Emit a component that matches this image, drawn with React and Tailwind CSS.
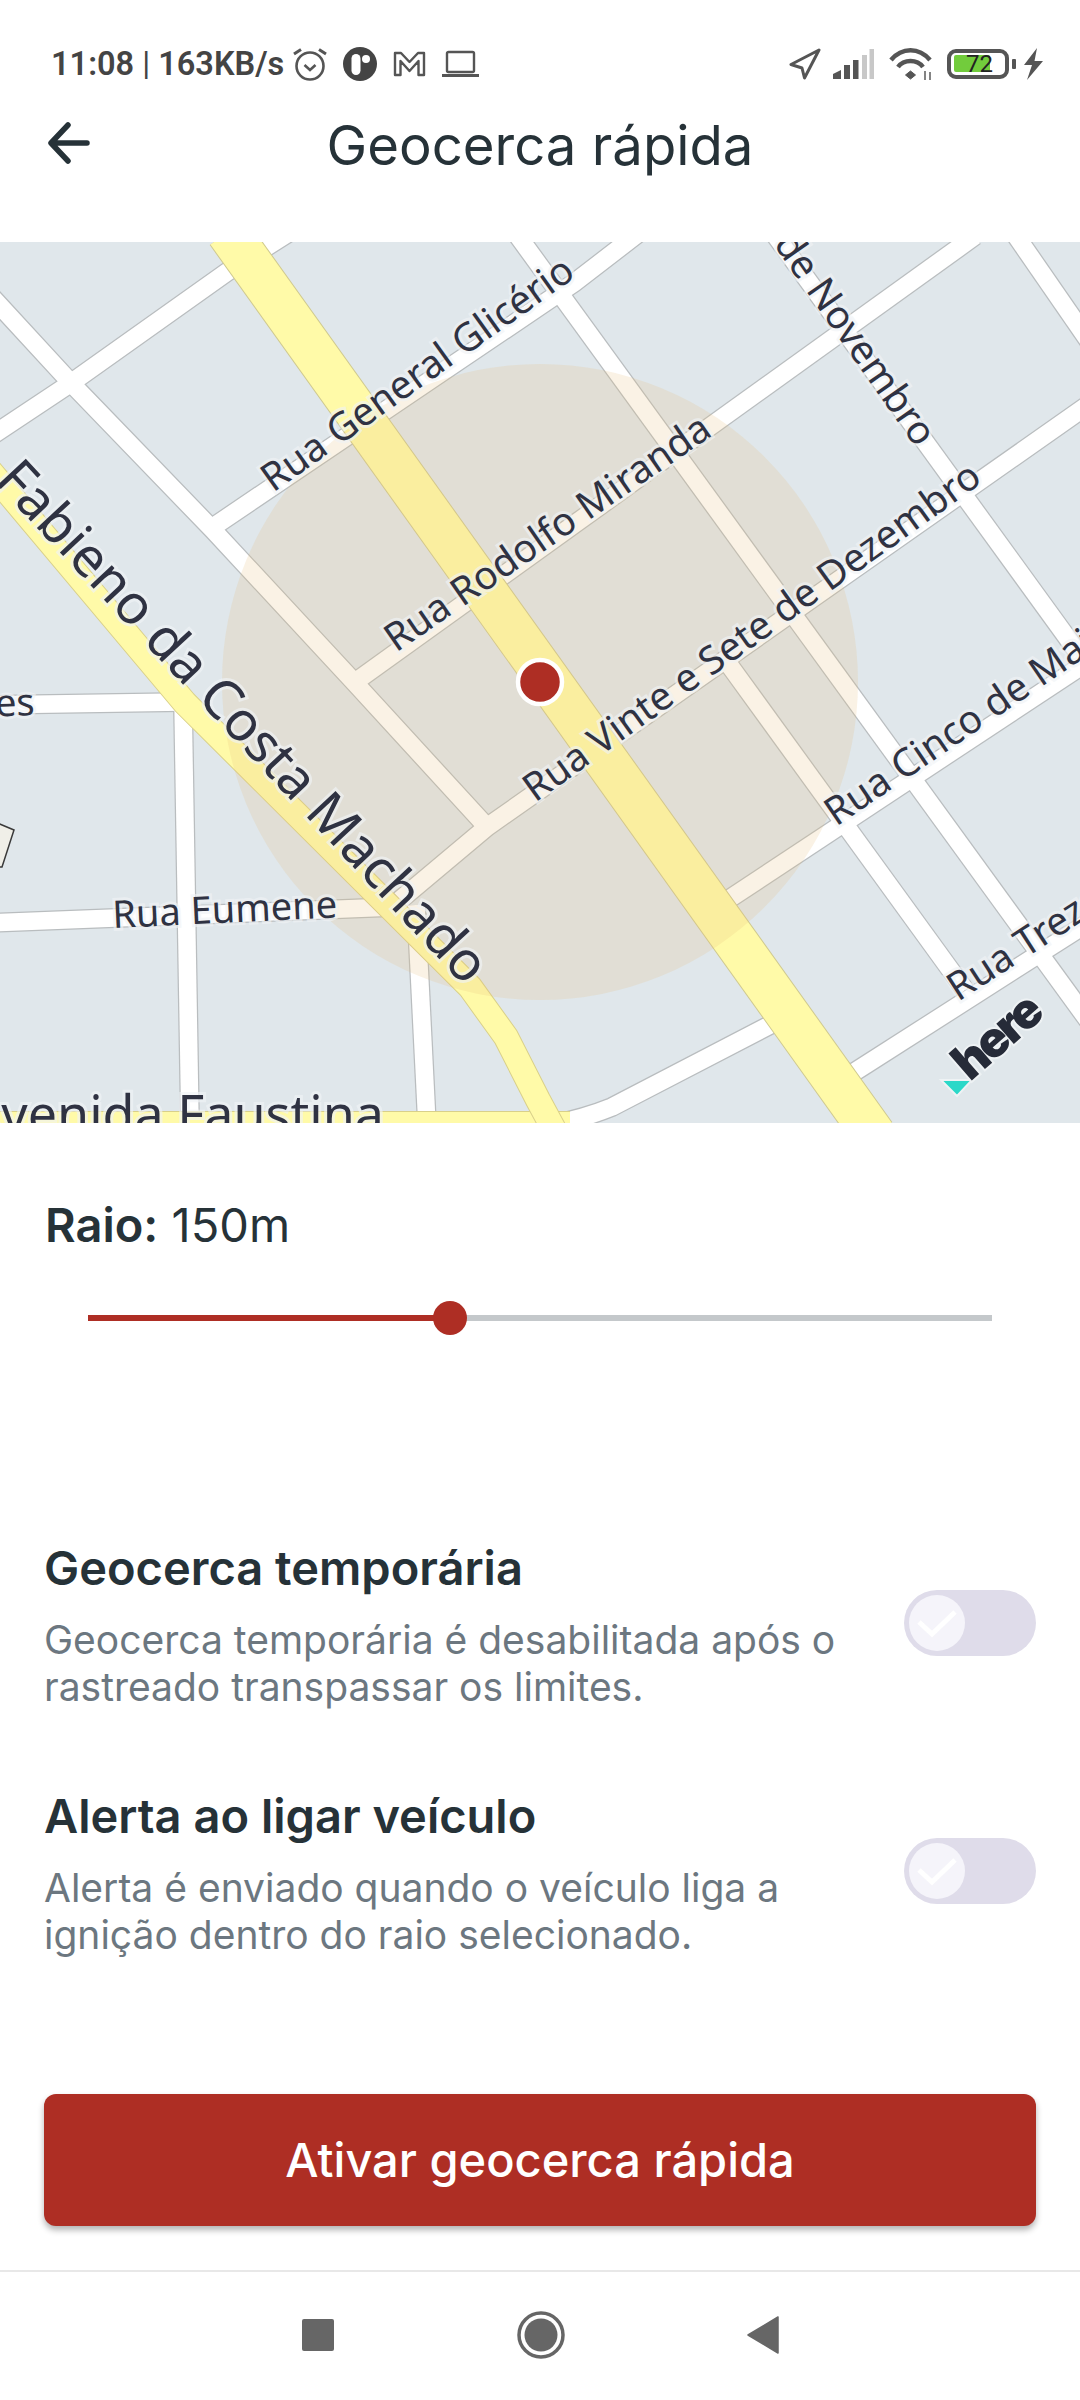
import React from "react";

const roads = [
  "M-10 295L71 383L213 530L355 683L487 827",
  "M-10 437L71 383L227 272L290 232",
  "M213 527L389 408L574 283L640 232",
  "M510 225L1095 1030",
  "M355 682L975 236",
  "M775 235L1100 683",
  "M1012 230L1095 350",
  "M400 900L487 827L1095 400",
  "M720 905L1095 657",
  "M550 1125Q585 1118 612 1107L770 1025",
  "M845 1078L1100 915",
  "M722 655L965 990",
  "M-10 923L393 907",
  "M-10 705L183 702",
  "M183 702L190 1125",
  "M416 905L427 1125",
];

const labels = [
  ["Rua General Glicério", 273, 493, -35.5, 39],
  ["Rua Rodolfo Miranda", 396, 653, -34.5, 39],
  ["Rua Vinte e Sete de Dezembro", 535, 803, -35.6, 39],
  ["Rua Cinco de Maio", 836, 827, -34.3, 39],
  ["Rua Treze", 958, 1002, -33, 39],
  ["de Novembro", 773, 244, 55, 39],
  ["Rua Eumene", 113, 928, -2.7, 38],
];

function MapView() {
  return (
    <svg width="1080" height="881" viewBox="0 242 1080 881" className="block font-['Noto_Sans',sans-serif]">
      <rect x="0" y="242" width="1080" height="881" fill="#e0e7eb" />
      <polygon points="-5,822 14,830 2,867 -5,867" fill="#f0efe8" stroke="#3a3a3a" strokeWidth="1.5" />
      <g fill="none" stroke="#b9bdbf" strokeWidth="20">
        {roads.map((d) => <path key={d} d={d} />)}
      </g>
      <g fill="none" stroke="#ffffff" strokeWidth="17.5">
        {roads.map((d) => <path key={d} d={d} />)}
      </g>
      <rect x="-5" y="1111" width="575" height="20" fill="#d9d08a" />
      <rect x="-5" y="1112" width="575" height="20" fill="#fffaa8" />
      <path d="M-15 465L185 703L470 987L506 1037L538 1100L565 1150" fill="none" stroke="#d9d08a" strokeWidth="26" />
      <path d="M-15 465L185 703L470 987L506 1037L538 1100L565 1150" fill="none" stroke="#fffaa8" strokeWidth="24" />
      <path d="M228 232L874 1135" fill="none" stroke="#cfc98f" strokeWidth="45" />
      <path d="M228 232L874 1135" fill="none" stroke="#fffaa8" strokeWidth="43" />
      <circle cx="540" cy="682" r="318" fill="rgba(228,190,125,0.2)" />
      <g fill="#2f3242" stroke="rgba(240,243,246,0.65)" strokeWidth="6" paintOrder="stroke" fontWeight="450">
        {labels.map(([t, x, y, a, s]) => (
          <text key={t} x={x} y={y} fontSize={s} transform={`rotate(${a} ${x} ${y})`}>{t}</text>
        ))}
        <text x="35" y="715" fontSize="38" textAnchor="end" transform="rotate(-2 35 715)">es</text>
        <text x="465" y="987" fontSize="54.5" textAnchor="end" transform="rotate(47 465 987)">Fabieno da Costa Machado</text>
        <text x="384" y="1133" fontSize="52" textAnchor="end">Avenida Faustina</text>
      </g>
      <polygon points="941,1080 972,1080 957,1096" fill="#2bd8c8" stroke="#eef2f4" strokeWidth="2" />
      <text x="970" y="1082" fontSize="49" fontWeight="900" letterSpacing="-3" fill="#262b38" stroke="#eef2f4" strokeWidth="4" paintOrder="stroke" transform="rotate(-41 970 1082)" className="font-['Inter',sans-serif]">here</text>
      <circle cx="540" cy="682" r="22" fill="#ae2e24" stroke="#ffffff" strokeWidth="4.5" />
    </svg>
  );
}

function Toggle() {
  return (
    <div className="w-[132px] h-[66px] rounded-full bg-[#dfdcea] p-[5px] shrink-0">
      <div className="w-[56px] h-[56px] rounded-full bg-[#f5f4fa] flex items-center justify-center">
        <svg width="40" height="32" viewBox="0 0 40 32" fill="none" stroke="#ffffff" strokeWidth="5">
          <path d="M2 15L15 27L38 5" />
        </svg>
      </div>
    </div>
  );
}

function Option({ title, l1, l2, className }) {
  return (
    <div className={`flex justify-between items-start pl-[44px] pr-[44px] ${className}`}>
      <div>
        <div className="text-[47px] leading-[56px] font-semibold text-[#263238]">{title}</div>
        <div className="mt-[20px] text-[39px] leading-[47px] text-[#6c7780]">{l1}<br />{l2}</div>
      </div>
      <div className="mt-[50px]"><Toggle /></div>
    </div>
  );
}

function StatusBar() {
  return (
    <div className="h-[48px] mt-[40px] flex items-center pl-[51px] font-['Roboto',sans-serif] text-[#444444]">
      <span className="text-[32.5px] leading-[48px] font-semibold whitespace-pre">11:08 <span className="font-normal">|</span> 163KB/s</span>
      <svg width="36" height="36" viewBox="0 0 36 36" className="ml-[8px]" fill="none" stroke="#555" strokeWidth="2.6">
        <circle cx="18" cy="20" r="13.5" />
        <path d="M12.5 19L18 24L23.5 19" />
        <path d="M2 8L9 3.5M34 8L27 3.5" strokeWidth="3" />
      </svg>
      <svg width="34" height="34" viewBox="0 0 34 34" className="ml-[15px]">
        <circle cx="17" cy="17" r="17" fill="#444" />
        <rect x="8.5" y="7" width="9" height="21" rx="4.5" fill="#fff" />
        <circle cx="23" cy="12" r="4" fill="#fff" />
      </svg>
      <svg width="33" height="26" viewBox="0 0 33 26" className="ml-[16px]" fill="none" stroke="#555" strokeWidth="2.4" strokeLinejoin="round">
        <path d="M2 24V2H8L16.500 11L25 2H31V24H25.500V10L16.500 20L7.500 10V24Z" />
      </svg>
      <svg width="37" height="28" viewBox="0 0 37 28" className="ml-[16px]" fill="none" stroke="#555">
        <rect x="5" y="2" width="27" height="20" rx="1.5" strokeWidth="2.4" />
        <path d="M0 25.500H37" strokeWidth="3" />
      </svg>
      <div className="ml-auto flex items-center">
        <svg width="32" height="32" viewBox="0 0 32 32" fill="none" stroke="#555" strokeWidth="3" strokeLinejoin="round">
          <path d="M30 2L2 16.500L13 20L15.500 30Z" />
        </svg>
        <svg width="41" height="30" viewBox="0 0 41 30" className="ml-[12px]">
          <path d="M0 30V25L8 21V30Z" fill="#555" />
          <rect x="11" y="16" width="6" height="14" fill="#555" />
          <rect x="20" y="11" width="5.500" height="19" fill="#555" />
          <rect x="29" y="6" width="5" height="24" fill="#c8c8c8" />
          <rect x="36.500" y="0" width="4.500" height="30" fill="#c8c8c8" />
        </svg>
        <svg width="46" height="34" viewBox="0 0 46 34" className="ml-[15px]" fill="none" stroke="#555" strokeWidth="4.500">
          <path d="M2 13C13 0 30 0 41 13" />
          <path d="M9 20C15 12 28 12 34 20" />
          <path d="M21.500 24L26.500 28L21.500 32L16.500 28Z" fill="#555" strokeWidth="1" />
          <path d="M36 33V24M41 25V33" strokeWidth="1.800" stroke="#777" />
        </svg>
        <div className="relative ml-[12px] w-[62px] h-[30px] rounded-[9px] border-[4px] border-[#555]">
          <div className="absolute left-[3px] top-[2px] w-[36px] h-[17px] rounded-[2px] bg-[#72cc3c]" />
          <div className="absolute left-[15px] -top-[3px] text-[24px] leading-[28px] text-[#222]">72</div>
        </div>
        <div className="ml-[3px] w-[4px] h-[10px] rounded-[1px] bg-[#555]" />
        <svg width="19" height="32" viewBox="0 0 19 32" className="ml-[8px] mr-[37px]" fill="#555">
          <path d="M13 0L0 17H8L3 32L19 13H10.500Z" />
        </svg>
      </div>
    </div>
  );
}

export default function App() {
  return (
    <div className="w-[1080px] h-[2400px] bg-white overflow-hidden flex flex-col font-['Inter',sans-serif]">
      <StatusBar />
      <div className="h-[110px] mb-[44px] grid grid-cols-[1fr_auto_1fr] items-center px-[48px]">
        <svg width="42" height="42" viewBox="0 0 42 42" fill="none" stroke="#263238" strokeWidth="5.500" strokeLinecap="round" strokeLinejoin="round">
          <path d="M39 21H4M20 3L3 21L20 39" />
        </svg>
        <div className="text-[54.5px] leading-[64px] text-[#263238] translate-y-[2px]">Geocerca rápida</div>
        <div />
      </div>
      <MapView />
      <div className="pl-[45px] mt-[74px] text-[47px] leading-[56px] text-[#263238]">
        <span className="font-semibold">Raio:</span> 150m
      </div>
      <div className="relative mx-[88px] mt-[62px] h-[6px] bg-[#c4c8cb]">
        <div className="h-[6px] w-[362px] bg-[#ae2e24]" />
        <div className="absolute left-[345px] -top-[14px] w-[34px] h-[34px] rounded-full bg-[#ae2e24]" />
      </div>
      <Option className="mt-[219px]" title="Geocerca temporária" l1="Geocerca temporária é desabilitada após o" l2="rastreado transpassar os limites." />
      <Option className="mt-[78px]" title="Alerta ao ligar veículo" l1="Alerta é enviado quando o veículo liga a" l2="ignição dentro do raio selecionado." />
      <button className="mx-[44px] mt-[136px] h-[132px] shrink-0 rounded-[12px] bg-[#ae2e24] text-white text-[47px] font-medium shadow-[0_4px_6px_rgba(0,0,0,0.3)]">
        Ativar geocerca rápida
      </button>
      <div className="mt-[44px] border-t-2 border-[#e8e8e8] h-[130px] relative">
        <div className="h-[128px] flex items-center justify-center">
          <div className="w-[32px] h-[32px] rounded-[2px] bg-[#666666] -mt-[2px]" />
          <svg width="48" height="48" viewBox="0 0 48 48" className="ml-[183px] -mt-[2px]">
            <circle cx="24" cy="24" r="22" fill="none" stroke="#666" strokeWidth="3.500" />
            <circle cx="24" cy="24" r="16.500" fill="#666" />
          </svg>
          <svg width="32" height="38" viewBox="0 0 32 38" className="ml-[182px] -mt-[2px]">
            <path d="M31 1V37L1 19Z" fill="#666" stroke="#666" strokeWidth="1.500" strokeLinejoin="round" />
          </svg>
        </div>
      </div>
    </div>
  );
}
